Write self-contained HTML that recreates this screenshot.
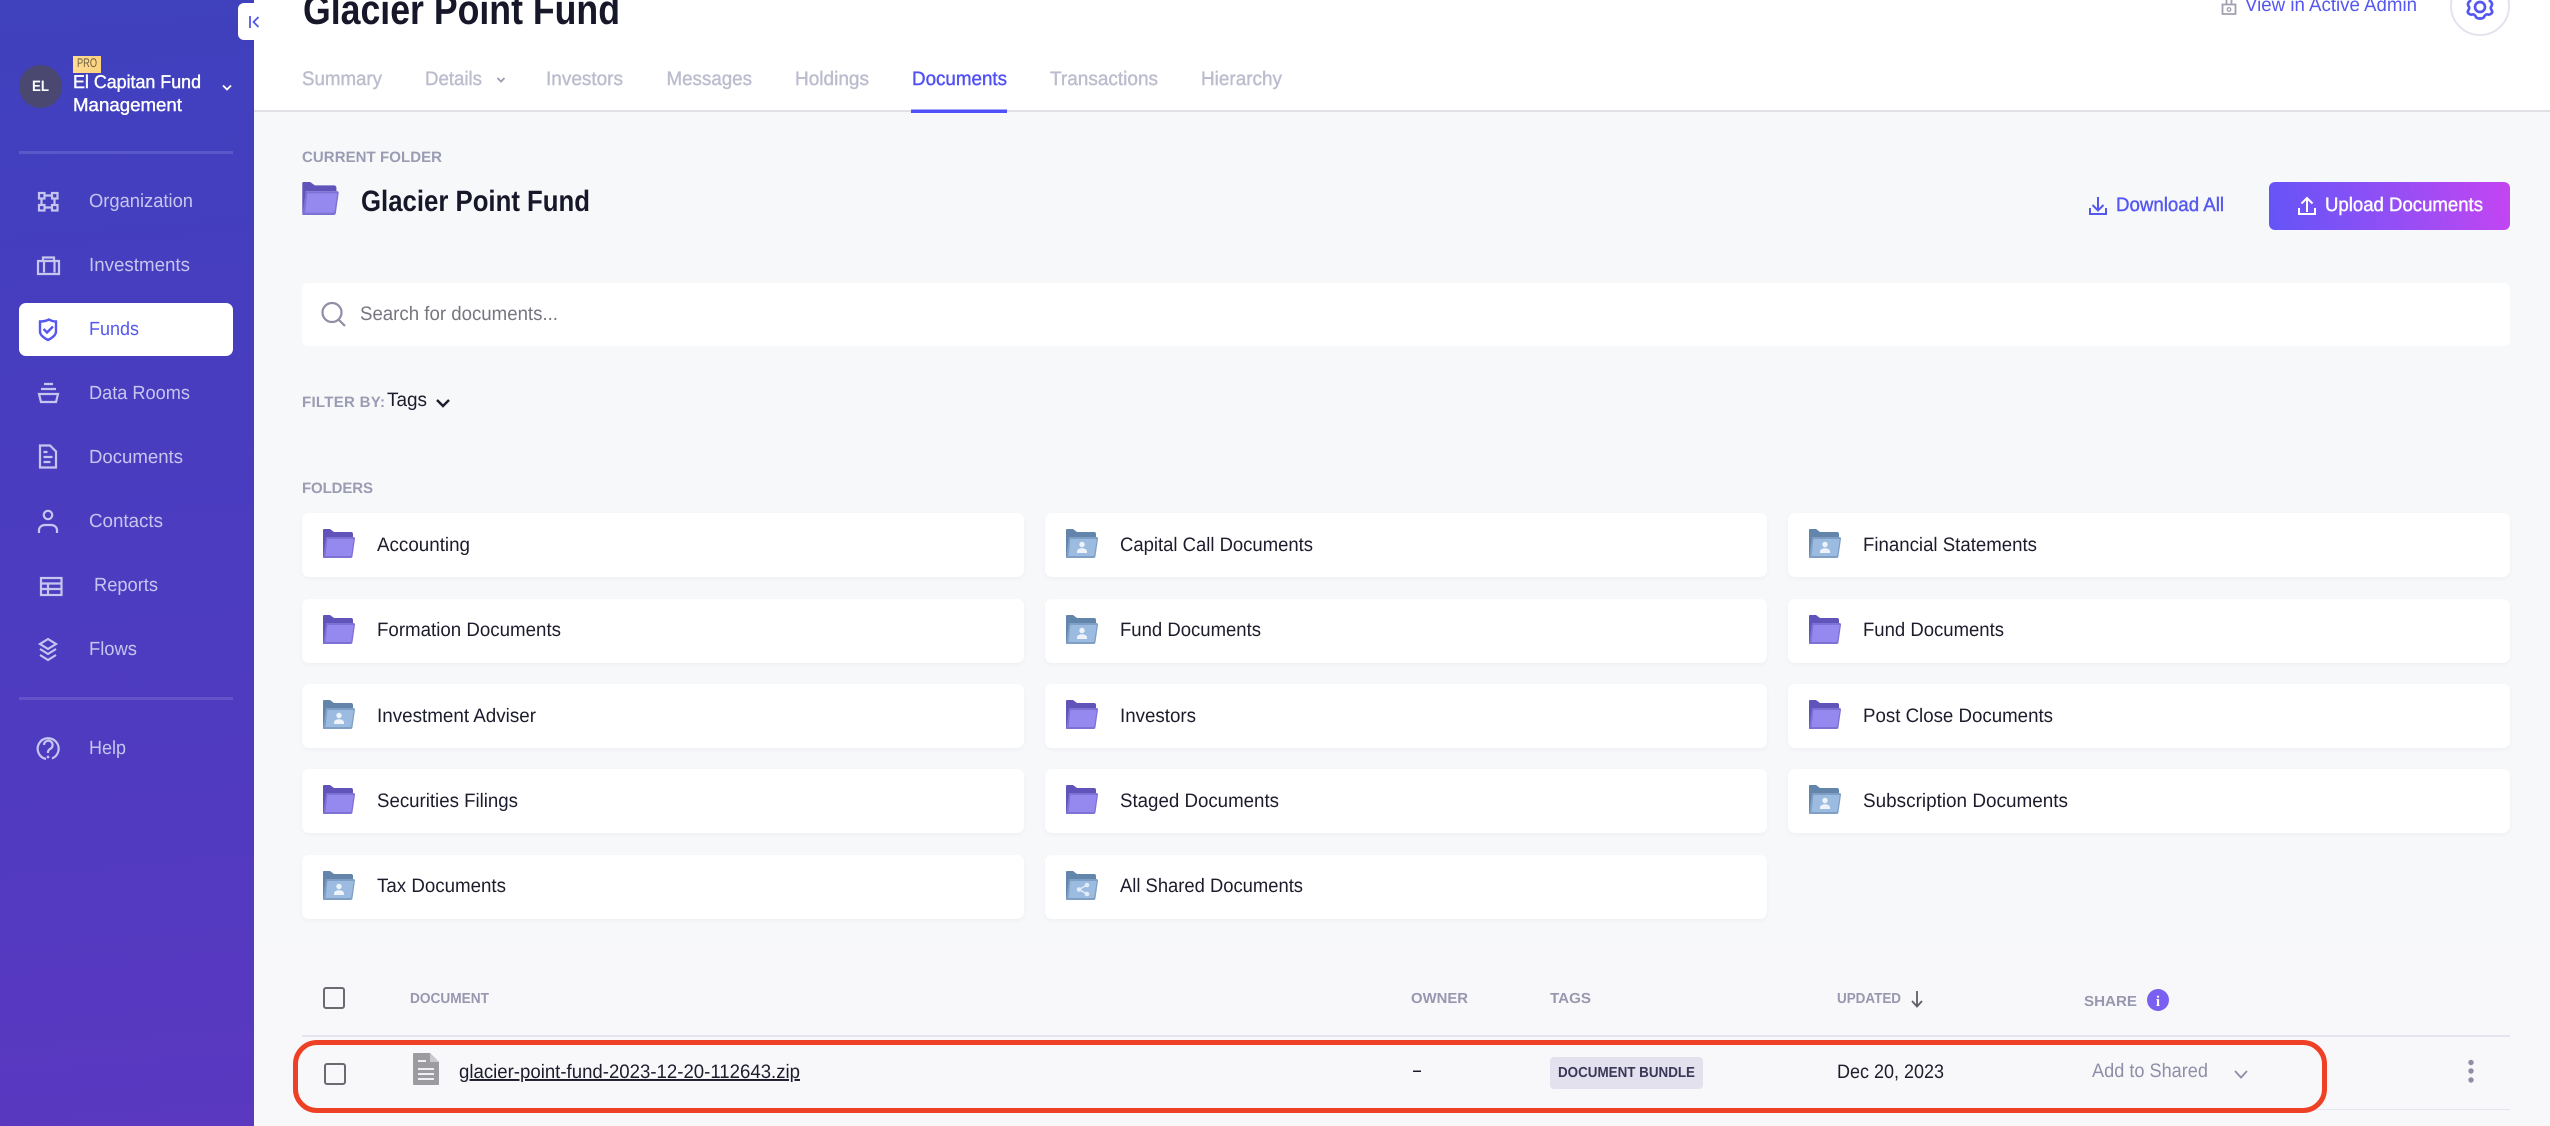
<!DOCTYPE html>
<html lang="en">
<head>
<meta charset="utf-8">
<title>Glacier Point Fund - Documents</title>
<style>
html,body{margin:0;padding:0;width:2550px;height:1126px;overflow:hidden;background:#f8f8fb}
body{position:relative;font-family:"Liberation Sans",sans-serif}
div{position:absolute;box-sizing:border-box}
#side{left:0;top:0;width:254px;height:1126px;background:linear-gradient(175deg,#3f41bd 0%,#483dbf 35%,#4f3bc0 65%,#5a38c0 100%)}
#head{left:254px;top:0;width:2296px;height:111px;background:#fff}
#hl{left:254px;top:110px;width:2296px;height:2px;background:#e1e1e5}
#main{left:254px;top:112px;width:2296px;height:830px;background:#f7f8fa}
.card{background:#fff;border-radius:7px;width:722px;height:64px;box-shadow:0 2px 5px rgba(40,40,80,.035)}
svg{position:absolute;left:0;top:0}
text{font-family:"Liberation Sans",sans-serif;text-rendering:geometricPrecision;font-size:19px}
.m{fill:currentColor;stroke:currentColor;stroke-width:.4px}
.nav{font-size:19px}
.tab{color:#bbbccd;font-size:19.500px}
.lab{fill:#9b9bb3;font-weight:bold;font-size:15px}
.th{fill:#9797af;font-weight:bold;font-size:14.500px}
.f{fill:#1c1c2c;font-size:19.500px}
.ic{fill:none;stroke:#c6c5f0;stroke-width:2.2}
</style>
</head>
<body>
<div id="side"></div>
<div id="head"></div>
<div id="main"></div>
<div id="hl"></div>
<div style="left:238px;top:3px;width:16px;height:37px;background:#fff;border-radius:6px 0 0 6px"></div>
<div style="left:19px;top:303px;width:214px;height:53px;background:#fff;border-radius:7px"></div>
<div style="left:19px;top:151px;width:214px;height:3px;background:#5a57c9"></div>
<div style="left:19px;top:697px;width:214px;height:3px;background:#6552ca"></div>
<div style="left:19px;top:65px;width:43px;height:43px;border-radius:50%;background:#4a4870"></div>
<div style="left:73px;top:56px;width:28px;height:17px;background:linear-gradient(90deg,#ffdc93,#fcd27c)"></div>
<div style="left:2450px;top:-24px;width:60px;height:60px;border-radius:50%;background:#fff;border:2px solid #e4e4ef"></div>
<div style="left:2269px;top:182px;width:241px;height:48px;border-radius:6px;background:linear-gradient(80deg,#6454f7 0%,#8d50f5 45%,#c445f2 100%)"></div>
<div style="left:302px;top:283px;width:2208px;height:63px;background:#fff;border-radius:6px"></div>

<div class="card" style="left:302px;top:513px"></div><div class="card" style="left:1045px;top:513px"></div><div class="card" style="left:1788px;top:513px"></div>
<div class="card" style="left:302px;top:599px"></div><div class="card" style="left:1045px;top:599px"></div><div class="card" style="left:1788px;top:599px"></div>
<div class="card" style="left:302px;top:684px"></div><div class="card" style="left:1045px;top:684px"></div><div class="card" style="left:1788px;top:684px"></div>
<div class="card" style="left:302px;top:769px"></div><div class="card" style="left:1045px;top:769px"></div><div class="card" style="left:1788px;top:769px"></div>
<div class="card" style="left:302px;top:855px"></div><div class="card" style="left:1045px;top:855px"></div>

<div style="left:302px;top:1035px;width:2208px;height:2px;background:#e6e4f0"></div>
<div style="left:302px;top:1109px;width:2208px;height:1px;background:#e6e4f0"></div>
<div style="left:323px;top:987px;width:22px;height:22px;border:2px solid #6a6a70;border-radius:3px"></div>
<div style="left:324px;top:1063px;width:22px;height:22px;border:2px solid #6a6a70;border-radius:3px"></div>
<div style="left:1550px;top:1057px;width:153px;height:32px;background:#e3e1ed;border-radius:4px"></div>
<div style="left:293px;top:1040px;width:2034px;height:73px;border:5px solid #ee4024;border-radius:24px"></div>

<svg width="2550" height="1126" viewBox="0 0 2550 1126" xmlns="http://www.w3.org/2000/svg">
<defs>
<symbol id="fp" viewBox="0 0 32 29">
<path d="M0 1a1 1 0 0 1 1-1h6l4 3h17a2 2 0 0 1 2 2v3H3v20H0z" fill="#6053ba"/>
<path d="M3 8h27.500a1.500 1.500 0 0 1 1.500 1.700l-2.500 17.500a2 2 0 0 1-2 1.800H0z" fill="#7e71d4"/>
<path d="M4.500 10h25.300a.8.800 0 0 1 .8 1l-2.300 15a1 1 0 0 1-1 1H2.500z" fill="#9589ef"/>
</symbol>
<symbol id="fb" viewBox="0 0 32 29">
<path d="M0 1a1 1 0 0 1 1-1h6l4 3h17a2 2 0 0 1 2 2v3H3v20H0z" fill="#6385ab"/>
<path d="M3 8h27.500a1.500 1.500 0 0 1 1.500 1.700l-2.500 17.500a2 2 0 0 1-2 1.800H0z" fill="#7f9fc4"/>
<path d="M4.500 10h25.300a.8.800 0 0 1 .8 1l-2.300 15a1 1 0 0 1-1 1H2.500z" fill="#9bbce0"/>
</symbol>
<symbol id="fu" viewBox="0 0 32 29">
<use href="#fb" width="32" height="29"/>
<circle cx="16" cy="15.500" r="2.700" fill="#eef3fa"/>
<path d="M11 24v-1.500c0-2 2.500-3.200 5-3.200s5 1.200 5 3.200V24z" fill="#eef3fa"/>
</symbol>
<symbol id="fs" viewBox="0 0 32 29">
<use href="#fb" width="32" height="29"/>
<path d="M21 14l-8 4.500 8 4.500" fill="none" stroke="#e3ecf7" stroke-width="1.400"/>
<circle cx="21" cy="14" r="2.300" fill="#e3ecf7"/><circle cx="13" cy="18.500" r="2.300" fill="#e3ecf7"/><circle cx="21" cy="23" r="2.300" fill="#e3ecf7"/>
</symbol>
</defs>

<!-- collapse toggle -->
<path d="M250 16v12M258.500 17l-5 5 5 5" fill="none" stroke="#5457f0" stroke-width="1.800"/>

<!-- sidebar header -->
<text x="40.500" y="91" text-anchor="middle" fill="#fff" font-weight="bold" style="font-size:15px" textLength="17" lengthAdjust="spacingAndGlyphs">EL</text>
<text x="77" y="67" fill="#6b5c43" style="font-size:12.500px" textLength="20" lengthAdjust="spacingAndGlyphs">PRO</text>
<text x="73" y="88" class="m" style="color:#fff;font-size:18.500px" textLength="128" lengthAdjust="spacingAndGlyphs">El Capitan Fund</text>
<text x="73" y="111" class="m" style="color:#fff;font-size:18.500px" textLength="109" lengthAdjust="spacingAndGlyphs">Management</text>
<path d="M223 85.500l4 4 4-4" fill="none" stroke="#fff" stroke-width="1.800"/>

<!-- nav text -->
<text x="89" y="207" class="nav" textLength="104" lengthAdjust="spacingAndGlyphs" fill="#c6c5f0">Organization</text>
<text x="89" y="271" class="nav" textLength="101" lengthAdjust="spacingAndGlyphs" fill="#c6c5f0">Investments</text>
<text x="89" y="335" class="nav" textLength="50" lengthAdjust="spacingAndGlyphs" fill="#5457f0">Funds</text>
<text x="89" y="399" class="nav" textLength="101" lengthAdjust="spacingAndGlyphs" fill="#c6c5f0">Data Rooms</text>
<text x="89" y="463" class="nav" textLength="94" lengthAdjust="spacingAndGlyphs" fill="#c6c5f0">Documents</text>
<text x="89" y="527" class="nav" textLength="74" lengthAdjust="spacingAndGlyphs" fill="#c6c5f0">Contacts</text>
<text x="94" y="591" class="nav" textLength="64" lengthAdjust="spacingAndGlyphs" fill="#c6c5f0">Reports</text>
<text x="89" y="655" class="nav" textLength="48" lengthAdjust="spacingAndGlyphs" fill="#c6c5f0">Flows</text>
<text x="89" y="754" class="nav" textLength="37" lengthAdjust="spacingAndGlyphs" fill="#c6c5f0">Help</text>

<!-- nav icons -->
<g class="ic">
<g stroke-width="2.200">
<rect x="39" y="193" width="5.500" height="5.500"/><rect x="52" y="193" width="5.500" height="5.500"/><rect x="39" y="205" width="5.500" height="5.500"/><rect x="52" y="205" width="5.500" height="5.500"/>
<path d="M44.500 195.500H52M44.500 207.500H52M41.500 198.500V205M54.500 198.500V205"/>
</g>
<path d="M38 261h21v13H38zM44 261v11.500M54.500 261v11.500M43 261v-3.500h11v3.500" stroke-width="2.200"/>
<path d="M40 321.500c3 0 6-.5 9-2 2.500 1.500 4.500 2 7 2v10c0 3.500-4 6.500-8 8.500-4-2-8-5-8-8.500z" stroke="#5457f0" stroke-width="2.400"/>
<path d="M43.500 329l3.500 3.500 6-6" stroke="#5457f0" stroke-width="2.400"/>
<path d="M44 384h9M41 389h15M39 394h19l-2 8H41z" stroke-width="2.200"/>
<path d="M40 445.500h10l6 6v16H40zM43.500 452h4M43.500 457h9M43.500 462h7" stroke-width="2.200"/>
<circle cx="48" cy="515" r="4.200" stroke-width="2.200"/>
<path d="M39 533v-3c0-3 3-5 6-5h6c3 0 6 2 6 5v3" stroke-width="2.200"/>
<rect x="41" y="578" width="20.500" height="17" stroke-width="2.200"/>
<path d="M41 583.500h20.500M41 589h20.500M48 583.500V595" stroke-width="2.200"/>
<path d="M48 639l8 5-8 5-8-5zM40 649l8 5 8-5M40 655l8 5 8-5" stroke-width="2.200"/>
<path d="M52 758.500a10.500 10.500 0 1 0-6 .5" stroke-width="2.200"/>
<path d="M44 745a4.300 4.300 0 1 1 6.500 3.700c-1.500.9-2.500 1.800-2.500 3.300v1" stroke-width="2.200"/>
<circle cx="48" cy="757" r=".6" stroke-width="1.500"/>
</g>

<!-- header -->
<text x="303" y="24" fill="#17172a" font-weight="bold" style="font-size:42px" textLength="317" lengthAdjust="spacingAndGlyphs">Glacier Point Fund</text>
<text x="302" y="85" class="tab m" textLength="80" lengthAdjust="spacingAndGlyphs">Summary</text>
<text x="425" y="85" class="tab m" textLength="57" lengthAdjust="spacingAndGlyphs">Details</text>
<path d="M497.500 78l3.500 3.500 3.500-3.500" fill="none" stroke="#9d9eb3" stroke-width="1.900"/>
<text x="546" y="85" class="tab m" textLength="77" lengthAdjust="spacingAndGlyphs">Investors</text>
<text x="666.500" y="85" class="tab m" textLength="85.500" lengthAdjust="spacingAndGlyphs">Messages</text>
<text x="795" y="85" class="tab m" textLength="74" lengthAdjust="spacingAndGlyphs">Holdings</text>
<text x="912" y="85" class="tab m" style="color:#4f50f5" textLength="95" lengthAdjust="spacingAndGlyphs">Documents</text>
<text x="1050" y="85" class="tab m" textLength="108" lengthAdjust="spacingAndGlyphs">Transactions</text>
<text x="1201" y="85" class="tab m" textLength="81" lengthAdjust="spacingAndGlyphs">Hierarchy</text>
<rect x="911" y="109.500" width="96" height="3.500" fill="#4f50f5"/>

<path d="M2222.500 4.500h13v9.500h-13zM2226.500 4.500V-2h5v6.500" fill="none" stroke="#a0a0b0" stroke-width="1.800"/><circle cx="2229" cy="9.500" r="1.800" fill="none" stroke="#a0a0b0" stroke-width="1.300"/>
<text x="2245" y="11" style="font-size:19.500px" fill="#5457f0" textLength="172" lengthAdjust="spacingAndGlyphs">View in Active Admin</text>
<g fill="none" stroke="#5457f0" stroke-width="2.700">
<circle cx="2480" cy="7" r="5"/>
<path d="M2471 0C2469 2 2467 3 2468.500 6 2470 8 2469 9 2468 11 2467 13 2470 15 2472 14.500 2474 14 2475 15 2476 17 2477 19 2483 19 2484 17 2485 15 2486 14 2488 14.500 2490 15 2493 13 2492 11 2491 9 2490 8 2491.500 6 2493 3 2491 2 2489 0"/>
</g>

<!-- current folder -->
<text x="302" y="162" class="lab" textLength="140" lengthAdjust="spacing">CURRENT FOLDER</text>
<use href="#fp" x="302" y="182" width="37" height="33"/>
<text x="361" y="211" fill="#17172a" font-weight="bold" style="font-size:29.500px" textLength="229" lengthAdjust="spacingAndGlyphs">Glacier Point Fund</text>
<path d="M2098 197v13M2092.500 205l5.500 5.500 5.500-5.500M2090 208v6h16v-6" fill="none" stroke="#5457f0" stroke-width="2"/>
<text x="2116" y="211" class="m" style="color:#5457f0;font-size:19.500px" textLength="108" lengthAdjust="spacingAndGlyphs">Download All</text>
<path d="M2307 212v-14M2301.500 203.500l5.500-5.500 5.500 5.500M2299 208v6h16v-6" fill="none" stroke="#fff" stroke-width="2"/>
<text x="2325" y="211" class="m" style="color:#fff;font-size:19.500px" textLength="158" lengthAdjust="spacingAndGlyphs">Upload Documents</text>

<!-- search -->
<circle cx="332" cy="312.500" r="9.500" fill="none" stroke="#8e8ea6" stroke-width="2.200"/>
<path d="M339 320l6 6" stroke="#8e8ea6" stroke-width="2.200"/>
<text x="360" y="320" fill="#76767f" style="font-size:19.500px" textLength="198" lengthAdjust="spacingAndGlyphs">Search for documents...</text>

<!-- filter -->
<text x="302" y="407" class="lab" textLength="83" lengthAdjust="spacing">FILTER BY:</text>
<text x="387" y="406" class="f" textLength="40" lengthAdjust="spacingAndGlyphs">Tags</text>
<path d="M437 400l6 6 6-6" fill="none" stroke="#1c1c2c" stroke-width="2.400"/>

<!-- folders -->
<text x="302" y="493" class="lab" textLength="71" lengthAdjust="spacing">FOLDERS</text>

<use href="#fp" x="323" y="529" width="32" height="29"/>
<text x="377" y="551" class="f" textLength="93" lengthAdjust="spacingAndGlyphs">Accounting</text>
<use href="#fu" x="1066" y="529" width="32" height="29"/>
<text x="1120" y="551" class="f" textLength="193" lengthAdjust="spacingAndGlyphs">Capital Call Documents</text>
<use href="#fu" x="1809" y="529" width="32" height="29"/>
<text x="1863" y="551" class="f" textLength="174" lengthAdjust="spacingAndGlyphs">Financial Statements</text>

<use href="#fp" x="323" y="615" width="32" height="29"/>
<text x="377" y="636" class="f" textLength="184" lengthAdjust="spacingAndGlyphs">Formation Documents</text>
<use href="#fu" x="1066" y="615" width="32" height="29"/>
<text x="1120" y="636" class="f" textLength="141" lengthAdjust="spacingAndGlyphs">Fund Documents</text>
<use href="#fp" x="1809" y="615" width="32" height="29"/>
<text x="1863" y="636" class="f" textLength="141" lengthAdjust="spacingAndGlyphs">Fund Documents</text>

<use href="#fu" x="323" y="700" width="32" height="29"/>
<text x="377" y="722" class="f" textLength="159" lengthAdjust="spacingAndGlyphs">Investment Adviser</text>
<use href="#fp" x="1066" y="700" width="32" height="29"/>
<text x="1120" y="722" class="f" textLength="76" lengthAdjust="spacingAndGlyphs">Investors</text>
<use href="#fp" x="1809" y="700" width="32" height="29"/>
<text x="1863" y="722" class="f" textLength="190" lengthAdjust="spacingAndGlyphs">Post Close Documents</text>

<use href="#fp" x="323" y="785" width="32" height="29"/>
<text x="377" y="807" class="f" textLength="141" lengthAdjust="spacingAndGlyphs">Securities Filings</text>
<use href="#fp" x="1066" y="785" width="32" height="29"/>
<text x="1120" y="807" class="f" textLength="159" lengthAdjust="spacingAndGlyphs">Staged Documents</text>
<use href="#fu" x="1809" y="785" width="32" height="29"/>
<text x="1863" y="807" class="f" textLength="205" lengthAdjust="spacingAndGlyphs">Subscription Documents</text>

<use href="#fu" x="323" y="871" width="32" height="29"/>
<text x="377" y="892" class="f" textLength="129" lengthAdjust="spacingAndGlyphs">Tax Documents</text>
<use href="#fs" x="1066" y="871" width="32" height="29"/>
<text x="1120" y="892" class="f" textLength="183" lengthAdjust="spacingAndGlyphs">All Shared Documents</text>

<!-- table head -->
<text x="410" y="1003" class="th" textLength="79" lengthAdjust="spacingAndGlyphs">DOCUMENT</text>
<text x="1411" y="1003" class="th" textLength="57" lengthAdjust="spacingAndGlyphs">OWNER</text>
<text x="1550" y="1003" class="th" textLength="41" lengthAdjust="spacingAndGlyphs">TAGS</text>
<text x="1837" y="1003" class="th" textLength="64" lengthAdjust="spacingAndGlyphs">UPDATED</text>
<path d="M1917 991v15M1912 1001l5 5.500 5-5.500" fill="none" stroke="#5f5f66" stroke-width="1.800"/>
<text x="2084" y="1006" class="th" textLength="53" lengthAdjust="spacingAndGlyphs">SHARE</text>
<circle cx="2158" cy="1000" r="11" fill="#7b5ff0"/>
<text x="2158" y="1006" text-anchor="middle" fill="#fff" font-weight="bold" style="font-size:15px;font-family:'Liberation Serif',serif">i</text>

<!-- row -->
<path d="M413 1054a1 1 0 0 1 1-1h16l9 9v22a1 1 0 0 1-1 1h-24a1 1 0 0 1-1-1z" fill="#9b9ba0"/>
<path d="M430 1053l9 9h-9z" fill="#c9c9cd"/>
<path d="M418 1061h8M418 1069h16M418 1074h16M418 1079h16" stroke="#f0f0f2" stroke-width="2"/>
<text x="459" y="1078" fill="#1c1c2c" text-decoration="underline" style="font-size:19.500px" textLength="341" lengthAdjust="spacingAndGlyphs">glacier-point-fund-2023-12-20-112643.zip</text>
<rect x="1413" y="1070.500" width="8" height="1.500" fill="#1c1c2c"/>
<text x="1558" y="1077" fill="#3a3858" font-weight="bold" style="font-size:14.500px" textLength="137" lengthAdjust="spacingAndGlyphs">DOCUMENT BUNDLE</text>
<text x="1837" y="1078" fill="#1c1c2c" style="font-size:19.500px" textLength="107" lengthAdjust="spacingAndGlyphs">Dec 20, 2023</text>
<text x="2092" y="1077" fill="#8e8ea6" style="font-size:19.500px" textLength="116" lengthAdjust="spacingAndGlyphs">Add to Shared</text>
<path d="M2235 1071l6 6.500 6-6.500" fill="none" stroke="#8e8ea6" stroke-width="1.800"/>
<circle cx="2471" cy="1062.500" r="2.700" fill="#8e8ea6"/><circle cx="2471" cy="1071" r="2.700" fill="#8e8ea6"/><circle cx="2471" cy="1080" r="2.700" fill="#8e8ea6"/>
</svg>
</body>
</html>
